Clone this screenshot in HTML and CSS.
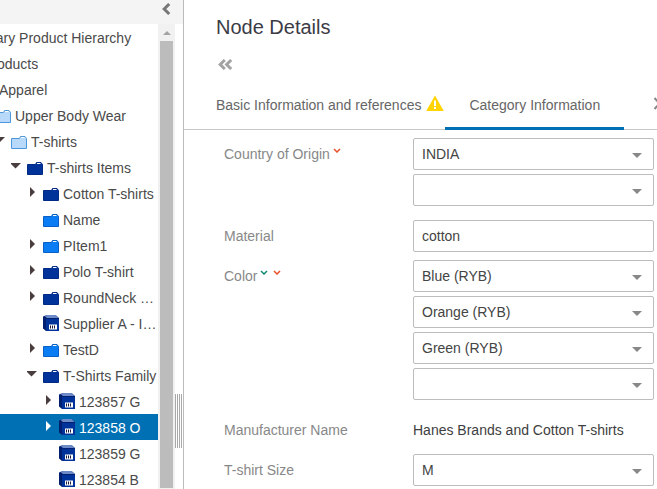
FILE: index.html
```html
<!DOCTYPE html>
<html lang="en">
<head>
<meta charset="utf-8">
<title>Node Details</title>
<link rel="stylesheet" href="styles.css">
</head>
<body>
<svg class="sprite" xmlns="http://www.w3.org/2000/svg">
  <symbol id="folder" viewBox="0 0 16 16">
    <path d="M.5 5.500H8.500L9.500 3.500H14L15.500 5.500V15.500H.5Z"/>
    <path d="M10 4.500H13.500" stroke="#fff" stroke-width="1"/>
  </symbol>
  <symbol id="cube" viewBox="0 0 16 16">
    <path d="M0 1.500 4 0H12.500L16 3V16H3L0 13.500Z" fill="#00206f"/>
    <path d="M1.500 1 4 0H12.500L15.500 3H4Z" fill="#6d8ac9"/>
    <rect x="3" y="4" width="13" height="12" fill="#00339a"/>
    <rect x="6" y="9.500" width="8" height="5" fill="#fff"/>
    <path d="M7.500 10.500V13.500M9.500 10.500V13.500M11.500 10.500V13.500" stroke="#1a1a3a" stroke-width="1"/>
  </symbol>
  <symbol id="caret-right" viewBox="0 0 16 16">
    <path d="M3 2 8 7 3 12Z"/>
  </symbol>
  <symbol id="caret-down" viewBox="0 0 16 16">
    <path d="M-1 4H10L4.500 9.500Z"/>
  </symbol>
  <symbol id="select-caret" viewBox="0 0 10 5">
    <path d="M0 0H10L5 5Z" fill="#888"/>
  </symbol>
  <symbol id="mark" viewBox="0 0 8 5">
    <path d="M1 1 4 4 7 1" fill="none" stroke-width="1.500"/>
  </symbol>
</svg>

<div class="page">
  <aside class="side">
    <div class="side-head">
      <svg class="collapse" viewBox="0 0 9 12"><path d="M7.200 1 2.200 6 7.200 11" fill="none" stroke="#777" stroke-width="3"/></svg>
    </div>
    <div class="side-body">
      <div class="tree">
        <ul class="tree-list">
          <li class="node l0"><span class="slot"></span><span class="ico"></span><span class="label">Primary Product Hierarchy</span></li>
          <li class="node l1"><span class="slot"></span><span class="ico"></span><span class="label">Products</span></li>
          <li class="node l2"><span class="slot"></span><span class="ico"></span><span class="label">Apparel</span></li>
          <li class="node l3"><span class="slot"></span><svg class="ico light"><use href="#folder"/></svg><span class="label">Upper Body Wear</span></li>
          <li class="node l4"><svg class="slot down"><use href="#caret-down"/></svg><svg class="ico light"><use href="#folder"/></svg><span class="label">T-shirts</span></li>
          <li class="node l5"><svg class="slot down"><use href="#caret-down"/></svg><svg class="ico dark"><use href="#folder"/></svg><span class="label">T-shirts Items</span></li>
          <li class="node l6"><svg class="slot right"><use href="#caret-right"/></svg><svg class="ico dark"><use href="#folder"/></svg><span class="label">Cotton T-shirts</span></li>
          <li class="node l6"><span class="slot"></span><svg class="ico mid"><use href="#folder"/></svg><span class="label">Name</span></li>
          <li class="node l6"><svg class="slot right"><use href="#caret-right"/></svg><svg class="ico mid"><use href="#folder"/></svg><span class="label">PItem1</span></li>
          <li class="node l6"><svg class="slot right"><use href="#caret-right"/></svg><svg class="ico dark"><use href="#folder"/></svg><span class="label">Polo T-shirt</span></li>
          <li class="node l6"><svg class="slot right"><use href="#caret-right"/></svg><svg class="ico dark"><use href="#folder"/></svg><span class="label">RoundNeck …</span></li>
          <li class="node l6"><span class="slot"></span><svg class="ico"><use href="#cube"/></svg><span class="label">Supplier A - I…</span></li>
          <li class="node l6"><svg class="slot right"><use href="#caret-right"/></svg><svg class="ico mid"><use href="#folder"/></svg><span class="label">TestD</span></li>
          <li class="node l6"><svg class="slot down"><use href="#caret-down"/></svg><svg class="ico dark"><use href="#folder"/></svg><span class="label">T-Shirts Family</span></li>
          <li class="node l7"><svg class="slot right"><use href="#caret-right"/></svg><svg class="ico"><use href="#cube"/></svg><span class="label">123857 G</span></li>
          <li class="node l7 selected"><svg class="slot right"><use href="#caret-right"/></svg><svg class="ico"><use href="#cube"/></svg><span class="label">123858 O</span></li>
          <li class="node l7"><span class="slot"></span><svg class="ico"><use href="#cube"/></svg><span class="label">123859 G</span></li>
          <li class="node l7"><span class="slot"></span><svg class="ico"><use href="#cube"/></svg><span class="label">123854 B</span></li>
        </ul>
      </div>
      <div class="scrollbar">
        <div class="scroll-up"></div>
        <div class="scroll-thumb"></div>
      </div>
      <div class="splitter"><div class="grip"></div></div>
    </div>
  </aside>

  <main class="details">
    <h1 class="title">Node Details</h1>
    <div class="back">
      <svg class="back-ico" viewBox="0 0 15 11"><path d="M6.800 1 2.200 5.500 6.800 10M13.200 1 8.600 5.500 13.200 10" fill="none" stroke="#a3a3a3" stroke-width="3"/></svg>
    </div>
    <nav class="tabs">
      <div class="tab">Basic Information and references
        <svg class="warn" viewBox="0 0 18 16"><path d="M9 .5 17.800 16H.2Z" fill="#ffd400"/><rect x="8" y="5.500" width="2" height="5.500" fill="#fff"/><rect x="8" y="12" width="2" height="2" fill="#fff"/></svg>
      </div>
      <div class="tab active">Category Information</div>
      <svg class="tab-more" viewBox="0 0 15 13"><path d="M1.500 1 6.500 6.500 1.500 12M8 1 13 6.500 8 12" fill="none" stroke="#888" stroke-width="2"/></svg>
    </nav>

    <form class="form">
      <div class="row multi">
        <div class="field-label">Country of Origin<svg class="mark red near"><use href="#mark"/></svg></div>
        <div class="controls">
          <div class="box select">INDIA<svg class="caret"><use href="#select-caret"/></svg></div>
          <div class="box select"><svg class="caret"><use href="#select-caret"/></svg></div>
        </div>
      </div>
      <div class="row">
        <div class="field-label">Material</div>
        <div class="controls"><div class="box">cotton</div></div>
      </div>
      <div class="row multi">
        <div class="field-label">Color<svg class="mark teal"><use href="#mark"/></svg><svg class="mark red gap"><use href="#mark"/></svg></div>
        <div class="controls">
          <div class="box select">Blue (RYB)<svg class="caret"><use href="#select-caret"/></svg></div>
          <div class="box select">Orange (RYB)<svg class="caret"><use href="#select-caret"/></svg></div>
          <div class="box select">Green (RYB)<svg class="caret"><use href="#select-caret"/></svg></div>
          <div class="box select"><svg class="caret"><use href="#select-caret"/></svg></div>
        </div>
      </div>
      <div class="row">
        <div class="field-label">Manufacturer Name</div>
        <div class="controls"><div class="static">Hanes Brands and Cotton T-shirts</div></div>
      </div>
      <div class="row">
        <div class="field-label">T-shirt Size</div>
        <div class="controls"><div class="box select">M<svg class="caret"><use href="#select-caret"/></svg></div></div>
      </div>
    </form>
  </main>
</div>
</body>
</html>
```

FILE: styles.css
```css
* { box-sizing: border-box; }
html, body { margin: 0; height: 100%; overflow: hidden; background: #fff; }
body { font-family: "Liberation Sans", Arial, sans-serif; font-size: 14px; color: #444; }
.sprite { display: none; }

.page { display: flex; height: 489px; }

/* left tree panel */
.side { width: 184px; flex: none; display: flex; flex-direction: column; border-right: 1px solid #bbb; }
.side-head { height: 24px; flex: none; background: #f4f4f4; display: flex; justify-content: flex-end; align-items: flex-start; padding: 3px 12px 0 0; }
.collapse { width: 9px; height: 12px; }
.side-body { flex: 1; display: flex; min-height: 0; }
.tree { width: 158px; flex: none; overflow: hidden; }
.tree-list { list-style: none; margin: 0 0 0 -96px; padding: 0; width: 254px; }
.node { height: 26px; display: flex; align-items: center; white-space: nowrap; color: #4a4a4a; }
.l0 { padding-left: 27px; }
.l1 { padding-left: 43px; }
.l2 { padding-left: 59px; }
.l3 { padding-left: 75px; }
.l4 { padding-left: 91px; }
.l5 { padding-left: 107px; }
.l6 { padding-left: 123px; }
.l7 { padding-left: 139px; }
.slot { width: 16px; height: 16px; flex: none; overflow: visible; fill: #4a3d3d; }
.ico { width: 16px; height: 16px; flex: none; overflow: visible; }
.label { margin-left: 4px; padding-top: 1px; }
.light { fill: #b9d9fa; stroke: #4f97dc; }
.dark { fill: #00339a; stroke: #002b84; }
.mid { fill: #0b7df4; stroke: #0a5fc4; }
.selected { background: #0070b4; color: #fff; }
.selected .slot { fill: #fff; }

.scrollbar { width: 17px; flex: none; background: #f1f1f1; display: flex; flex-direction: column; align-items: center; padding-bottom: 1px; }
.scroll-up { width: 0; height: 0; margin-top: 7px; border-left: 4px solid transparent; border-right: 4px solid transparent; border-bottom: 4px solid #a3a3a3; }
.scroll-thumb { flex: 1; width: 13px; margin-top: 6px; background: #bcbcbc; }

.splitter { flex: 1; padding-top: 370px; }
.grip { height: 54px; width: 7px; background: repeating-linear-gradient(to right, #a8a8a8 0 1px, #fff 1px 2px); }

/* right details panel */
.details { flex: 1; min-width: 0; overflow: hidden; }
.title { margin: 0; height: 54px; line-height: 54px; padding-left: 32px; font-size: 20px; font-weight: 400; color: #3b3b46; }
.back { height: 20px; padding-left: 34px; display: flex; align-items: center; }
.back-ico { width: 15px; height: 11px; }
.tabs { display: flex; align-items: stretch; height: 56px; padding-top: 6px; padding-left: 32px; border-bottom: 1px solid #c8c8c8; color: #666; }
.tab { height: 50px; display: flex; align-items: center; flex: none; }
.warn { width: 18px; height: 16px; margin-left: 5px; margin-top: -4px; }
.tab.active { width: 179px; margin-left: 1px; padding-left: 24px; border-bottom: 3px solid #0070b4; padding-top: 3px; }
.tab-more { width: 15px; height: 13px; flex: none; margin-left: 29px; align-self: center; margin-top: -2px; }

.form { padding: 8px 3px 0 40px; }
.row { display: flex; margin-bottom: 8px; }
.row.multi { margin-bottom: 14px; }
.field-label { width: 189px; flex: none; line-height: 32px; color: #888; display: flex; align-items: flex-start; }
.controls { flex: 1; display: flex; flex-direction: column; gap: 4px; }
.box { height: 32px; border: 1px solid #bdbdbd; border-radius: 2px; padding: 0 8px; line-height: 30px; color: #444; display: flex; justify-content: space-between; align-items: center; }
.static { line-height: 32px; color: #3e3e3e; }
.select { padding-right: 11px; }
.caret { width: 10px; height: 5px; margin-left: auto; margin-top: 2px; flex: none; }
.mark { width: 8px; height: 5px; flex: none; margin: 10px 0 0 1px; }
.mark.near { margin-left: 3px; }
.mark.red { stroke: #e8502a; }
.mark.teal { stroke: #0f8a72; margin-left: 3px; }
.mark.gap { margin-left: 5px; }
```
